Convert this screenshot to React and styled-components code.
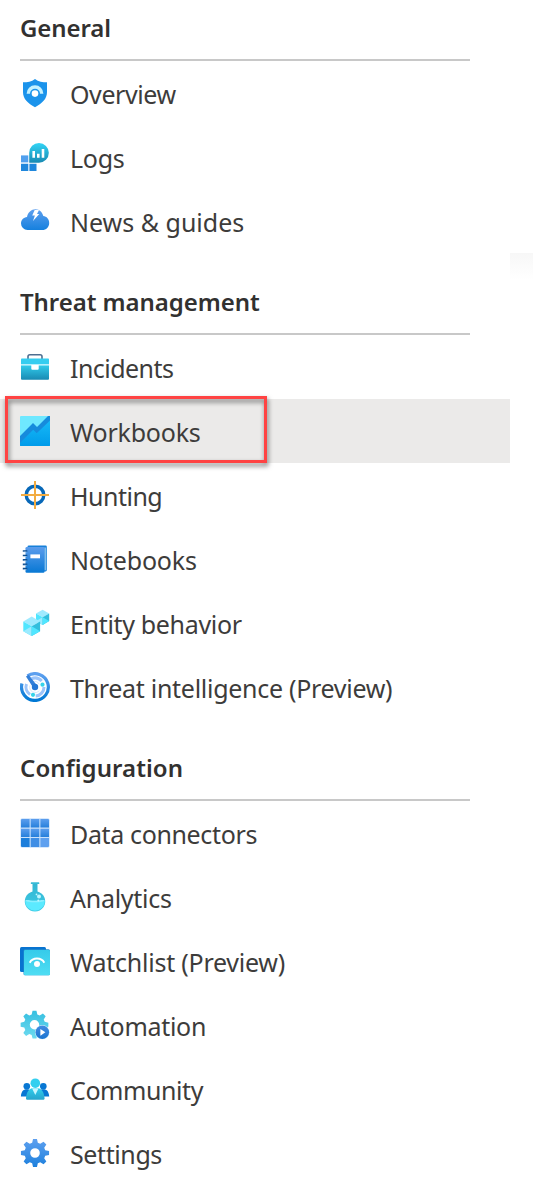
import React from "react";
import styled, { createGlobalStyle } from "styled-components";

const GlobalStyle = createGlobalStyle`
  body {
    margin: 0;
    background: #fff;
    color: #323130;
    font-family: "Noto Sans", "Open Sans", sans-serif;
    overflow: hidden;
  }
`;

const Page = styled.div`
  display: flex;
  height: 1186px;
  overflow: hidden;
`;

const Menu = styled.nav`
  width: 510px;
  flex: none;
`;

const Aside = styled.div`
  flex: 1;
  margin-top: 253px;
  height: 27px;
  background: linear-gradient(#f7f7f7, #fff);
`;

const Heading = styled.h2`
  box-sizing: border-box;
  display: flex;
  align-items: flex-end;
  height: ${(p) => (p.$first ? 61 : 82)}px;
  margin: 0 40px 0 20px;
  padding-bottom: 13px;
  border-bottom: 2px solid #c8c8c8;
  font-size: 24px;
  font-weight: 600;
  line-height: 36px;
  letter-spacing: ${(p) => p.$spacing}px;
  white-space: nowrap;
`;

const List = styled.ul`
  list-style: none;
  margin: 0;
  padding: 0;
`;

const Item = styled.li`
  position: relative;
  display: flex;
  align-items: center;
  gap: 20px;
  height: 64px;
  padding-left: 20px;
  background: ${(p) => (p.$selected ? "#ebeae9" : "transparent")};
`;

const Glyph = styled.svg`
  width: 30px;
  height: 30px;
  flex: none;
`;

const Label = styled.span`
  color: #3d3c3b;
  font-size: 25px;
  font-weight: 400;
  line-height: 36px;
  padding-top: 2px;
  letter-spacing: ${(p) => p.$spacing}px;
  white-space: nowrap;
`;

const Callout = styled.div`
  position: absolute;
  box-sizing: border-box;
  left: 5px;
  top: -3px;
  width: 262px;
  height: 67px;
  border: 3px solid #ff4343;
  filter: drop-shadow(1px 3px 2.5px rgba(0, 0, 0, 0.55));
`;

function Gradient({ id, from, to }) {
  return (
    <linearGradient id={id} x1="0" y1="0" x2="0" y2="1">
      <stop offset="0" stopColor={from} />
      <stop offset="1" stopColor={to} />
    </linearGradient>
  );
}

function gearPath(cx, cy, outer, inner, hole) {
  const points = [];
  for (let i = 0; i < 8; i += 1) {
    const a = (i * Math.PI) / 4;
    [[-0.27, inner], [-0.14, outer], [0.14, outer], [0.27, inner]].forEach(([d, r]) => {
      points.push(`${(cx + r * Math.sin(a + d)).toFixed(2)} ${(cy - r * Math.cos(a + d)).toFixed(2)}`);
    });
  }
  return `M${points.join("L")}ZM${cx - hole} ${cy}a${hole} ${hole} 0 1 0 ${hole * 2} 0a${hole} ${hole} 0 1 0 ${-hole * 2} 0Z`;
}

const cube = (x, y, w, h) => {
  const m = x + w / 2;
  const r = x + w;
  const q = y + h / 4;
  const c = y + h / 2;
  const l = y + (h * 3) / 4;
  const b = y + h;
  return (
    <>
      <path d={`M${m} ${y}L${r} ${q}L${m} ${c}L${x} ${q}Z`} fill="#9feaff" />
      <path d={`M${x} ${q}L${m} ${c}V${b}L${x} ${l}Z`} fill="#50e6ff" />
      <path d={`M${x} ${l}L${m} ${c}V${b}Z`} fill="#9cebff" />
      <path d={`M${r} ${q}L${m} ${c}V${b}L${r} ${l}Z`} fill="#32bedd" />
      <path d={`M${r} ${l}L${m} ${c}V${b}Z`} fill="#50e6ff" />
    </>
  );
};

const icons = {
  overview: (
    <>
      <path d="M15 1c3.500 2.900 7.500 3.200 12 3.300V14c0 7-5 11.500-12 15.200C8 25.500 3 21 3 14V4.300C7.500 4.200 11.500 3.900 15 1Z" fill="#1b93eb" />
      <path d="M8.300 15.700a6.700 6.700 0 0 1 13.400 0" fill="none" stroke="#c3f1ff" strokeWidth="3.400" />
      <circle cx="15" cy="15.600" r="3.300" fill="#fff" />
    </>
  ),
  logs: (
    <>
      <Gradient id="logBubble" from="#32d4f5" to="#198ab3" />
      <path d="M1 13.400h7.300v7H1Z" fill="#50a0ee" />
      <path d="M1 21.800h7.300V29H1ZM9.400 21.800h7.100V29H9.400Z" fill="#1f87dc" />
      <path d="M19 1a9.850 9.850 0 0 1 0 19.700H9.200V10.800A9.800 9.800 0 0 1 19 1Z" fill="url(#logBubble)" />
      <path d="M12.400 9H15v6.800h-2.600ZM17 11.800h2.600v4H17ZM21.700 7h2.600v8.800h-2.600Z" fill="#fff" />
    </>
  ),
  news: (
    <>
      <Gradient id="cloud" from="#5ea0ef" to="#1580de" />
      <path d="M7.500 24A6.700 6.700 0 0 1 1 17.400c0-3.500 2.600-6.200 6-6.500C8 6.400 11.200 3.200 15.500 3.200c4 0 7 2.900 7.800 6.900 3.400.3 5.900 3.200 5.900 6.800 0 4-3 7.100-6.900 7.100Z" fill="url(#cloud)" />
      <path d="M14.700 4h4.300l-2 4h2.300l-6.300 7 1.900-5.400h-2.700Z" fill="#fff" />
    </>
  ),
  incidents: (
    <>
      <Gradient id="case" from="#32ccec" to="#198ab3" />
      <path d="M8 7V4.500Q8 2.700 9.900 2.700h10.200Q22 2.700 22 4.500V7" fill="none" stroke="#4e6f91" strokeWidth="1.600" />
      <rect x="1" y="6.500" width="28" height="7" rx=".8" fill="#35cdf0" />
      <path d="M1 13h28v13.700a1 1 0 0 1-1 1H2a1 1 0 0 1-1-1Z" fill="url(#case)" />
      <path d="M1 12.200h28v1.300H1Z" fill="#d9f8ff" />
      <path d="M11.300 13h7.400v3.800a1 1 0 0 1-1 1h-5.400a1 1 0 0 1-1-1Z" fill="#fff" />
    </>
  ),
  workbooks: (
    <>
      <Gradient id="area" from="#16b9f7" to="#009bea" />
      <rect width="30" height="30" rx="1" fill="#6fe8ff" />
      <path d="M0 20L13 7l4 4L28 0h2v29a1 1 0 0 1-1 1H1a1 1 0 0 1-1-1Z" fill="#168bdc" />
      <path d="M0 27L13.200 13.800l3.500 3.500L30 4.500V29a1 1 0 0 1-1 1H1a1 1 0 0 1-1-1Z" fill="url(#area)" />
    </>
  ),
  hunting: (
    <>
      <circle cx="15" cy="15" r="8.800" fill="none" stroke="#0868b8" strokeWidth="3.400" />
      <path d="M15 1v28M1 15h28" stroke="#f3ac41" strokeWidth="2" />
    </>
  ),
  notebooks: (
    <>
      <Gradient id="cover" from="#5b9cec" to="#0878d4" />
      <rect x="7.500" y="1.400" width="19.300" height="26" rx="1.300" fill="#1680d9" />
      <path d="M24.500 3.500h1.100v22.700h-1.100Z" fill="#c7e7fb" />
      <rect x="5.500" y="3" width="19" height="25.700" rx="1.200" fill="url(#cover)" />
      <path d="M2.800 7h4.500M2.800 11.500h4.500M2.800 15.900h4.500M2.800 20.300h4.500M2.800 24.700h4.500" stroke="#0f4f91" strokeWidth="1.700" />
      <path d="M3.600 8h3M3.600 12.500h3M3.600 16.900h3M3.600 21.300h3M3.600 25.700h3" stroke="#b7dcf6" strokeWidth=".6" />
      <rect x="10.400" y="10.400" width="9.600" height="3.900" fill="#fff" />
    </>
  ),
  entity: (
    <>
      {cube(16, 1.7, 13.2, 15.2)}
      {cube(3.3, 8.5, 16.8, 19.5)}
    </>
  ),
  intelligence: (
    <>
      <Gradient id="ring" from="#5ea0ef" to="#0078d4" />
      <path d="M7.500 3.900a13.400 13.400 0 1 1-5.500 7.600" fill="none" stroke="url(#ring)" strokeWidth="3.200" />
      <path d="M11.500 6.700A9 9 0 0 1 21.700 9.100M24 15a9 9 0 0 1-8.300 9M10 22.500a9 9 0 0 1-3.500-10.500" fill="none" stroke="#9bc4fa" strokeWidth="3" />
      <path d="M12.100 10a5.700 5.700 0 0 1 7.200 2.300M9.900 13.500a5.600 5.600 0 0 0 9.500 5.300" fill="none" stroke="#cce1fc" strokeWidth=".8" />
      <path d="M6 4.400L8.600 2.800L17 13.500L13.400 16Z" fill="#337fd8" />
      <circle cx="15" cy="15" r="3.200" fill="#2577d5" />
      <circle cx="22.500" cy="12.700" r="2.100" fill="#35d3e9" />
      <circle cx="13" cy="22.800" r="2.100" fill="#35d3e9" />
    </>
  ),
  connectors: (
    <>
      <Gradient id="cell" from="#5c9eee" to="#267fdb" />
      <rect x=".3" y=".3" width="29.400" height="29.400" rx="2" fill="#c9e1fb" />
      <path d="M2 1h7.600v8.600H1V2a1 1 0 0 1 1-1ZM10.700 1h8.600v8.600h-8.600ZM20.400 1H28a1 1 0 0 1 1 1v7.600h-8.600Z" fill="url(#cell)" />
      <path d="M1 10.700h8.600v8.200H1ZM10.700 10.700h8.600v8.200h-8.600ZM20.400 10.700H29v8.200h-8.600Z" fill="url(#cell)" />
      <path d="M1 20.100h8.600V29H2a1 1 0 0 1-1-1Z" fill="#1c7edb" />
      <path d="M10.700 20.100h8.600V29h-8.600Z" fill="#3f8ee5" />
      <path d="M20.400 20.100H29V28a1 1 0 0 1-1 1h-7.600Z" fill="#5ea0ef" />
    </>
  ),
  analytics: (
    <>
      <Gradient id="flask" from="#32b5d2" to="#3fcbe5" />
      <path d="M12.500 1.500h5v8a10.200 10.200 0 1 1-5 0Z" fill="url(#flask)" />
      <rect x="10.800" y=".3" width="8.500" height="1.700" rx=".6" fill="#38bbd6" />
      <path d="M5 18.800h20a10 10 0 0 1-20 0Z" fill="#5beaff" />
      <path d="M5 18.200c4-.6 5 .6 10 .6s6-1.200 10-.6c-2 1.900-6 2.100-10 2.100s-8-.2-10-2.100Z" fill="#8aefff" />
      <circle cx="19" cy="14.600" r="2" fill="#bff6ff" />
      <circle cx="16.500" cy="12.400" r=".9" fill="#bff6ff" />
      <circle cx="18.300" cy="18.500" r="1" fill="#bff6ff" />
    </>
  ),
  watchlist: (
    <>
      <Gradient id="card" from="#36cbea" to="#4fddf3" />
      <rect x="0" y="1" width="26" height="25" rx="1.500" fill="#0873d0" />
      <rect x="3.500" y="3.300" width="26.500" height="26" rx="1.500" fill="#238fce" />
      <rect x="4" y="4" width="26" height="25.300" rx="1.300" fill="url(#card)" />
      <path d="M9.700 16.700a8.100 7.300 0 0 1 14.600 0" fill="none" stroke="#fff" strokeWidth="1.900" />
      <circle cx="17" cy="18" r="3" fill="#fff" />
    </>
  ),
  automation: (
    <>
      <Gradient id="autoGear" from="#36bfe0" to="#6edbf0" />
      <Gradient id="play" from="#438be1" to="#1974d0" />
      <path d={gearPath(14.5, 14.7, 14, 10.6, 4.7)} fill="url(#autoGear)" fillRule="evenodd" />
      <circle cx="22.300" cy="22.300" r="7.300" fill="#dff6fc" />
      <circle cx="22.300" cy="22.300" r="6.800" fill="url(#play)" />
      <path d="M20.400 18.900v6.800l5-3.400Z" fill="#fff" />
    </>
  ),
  community: (
    <>
      <Gradient id="person" from="#30cfee" to="#26a4cc" />
      <circle cx="6.800" cy="12.300" r="3.300" fill="#0877d3" />
      <circle cx="23.300" cy="12.300" r="3.300" fill="#0877d3" />
      <path d="M.9 22.400c.3-4.600 2.100-7.200 5.900-7.200s5.600 2.600 5.900 7.200ZM17.400 22.400c.3-4.600 2.100-7.200 5.900-7.200s5.600 2.600 5.900 7.200Z" fill="#0877d3" />
      <path d="M6 24.600c.5-6.500 2.700-10.900 9.300-10.900s8.800 4.400 9.300 10.900a1 1 0 0 1-1 1.100H7a1 1 0 0 1-1-1.100Z" fill="url(#person)" />
      <path d="M12 14.300h6.600l-3.300 6.800Z" fill="#c9f7ff" />
      <circle cx="15.300" cy="9.200" r="4.800" fill="#33cfef" />
    </>
  ),
  settings: (
    <>
      <Gradient id="gear" from="#5ea0ef" to="#1d80dd" />
      <path d={gearPath(15, 15, 14.2, 10.6, 4.8)} fill="url(#gear)" fillRule="evenodd" />
    </>
  ),
};

const sections = [
  {
    title: "General",
    spacing: -0.1,
    items: [
      ["overview", "Overview", -0.42],
      ["logs", "Logs", -0.3],
      ["news", "News & guides", 0],
    ],
  },
  {
    title: "Threat management",
    spacing: -0.06,
    items: [
      ["incidents", "Incidents", -0.55],
      ["workbooks", "Workbooks", -0.22],
      ["hunting", "Hunting", -0.5],
      ["notebooks", "Notebooks", -0.15],
      ["entity", "Entity behavior", -0.33],
      ["intelligence", "Threat intelligence (Preview)", -0.29],
    ],
  },
  {
    title: "Configuration",
    spacing: 0.08,
    items: [
      ["connectors", "Data connectors", -0.36],
      ["analytics", "Analytics", -0.27],
      ["watchlist", "Watchlist (Preview)", -0.24],
      ["automation", "Automation", -0.3],
      ["community", "Community", -0.42],
      ["settings", "Settings", -0.4],
    ],
  },
];

export default function App() {
  const selected = "workbooks";
  return (
    <Page>
      <GlobalStyle />
      <Menu>
        {sections.map((section, index) => (
          <React.Fragment key={section.title}>
            <Heading $first={index === 0} $spacing={section.spacing}>
              {section.title}
            </Heading>
            <List>
              {section.items.map(([icon, text, spacing]) => (
                <Item key={icon} $selected={icon === selected}>
                  <Glyph viewBox="0 0 30 30">{icons[icon]}</Glyph>
                  <Label $spacing={spacing}>{text}</Label>
                  {icon === selected && <Callout />}
                </Item>
              ))}
            </List>
          </React.Fragment>
        ))}
      </Menu>
      <Aside />
    </Page>
  );
}
